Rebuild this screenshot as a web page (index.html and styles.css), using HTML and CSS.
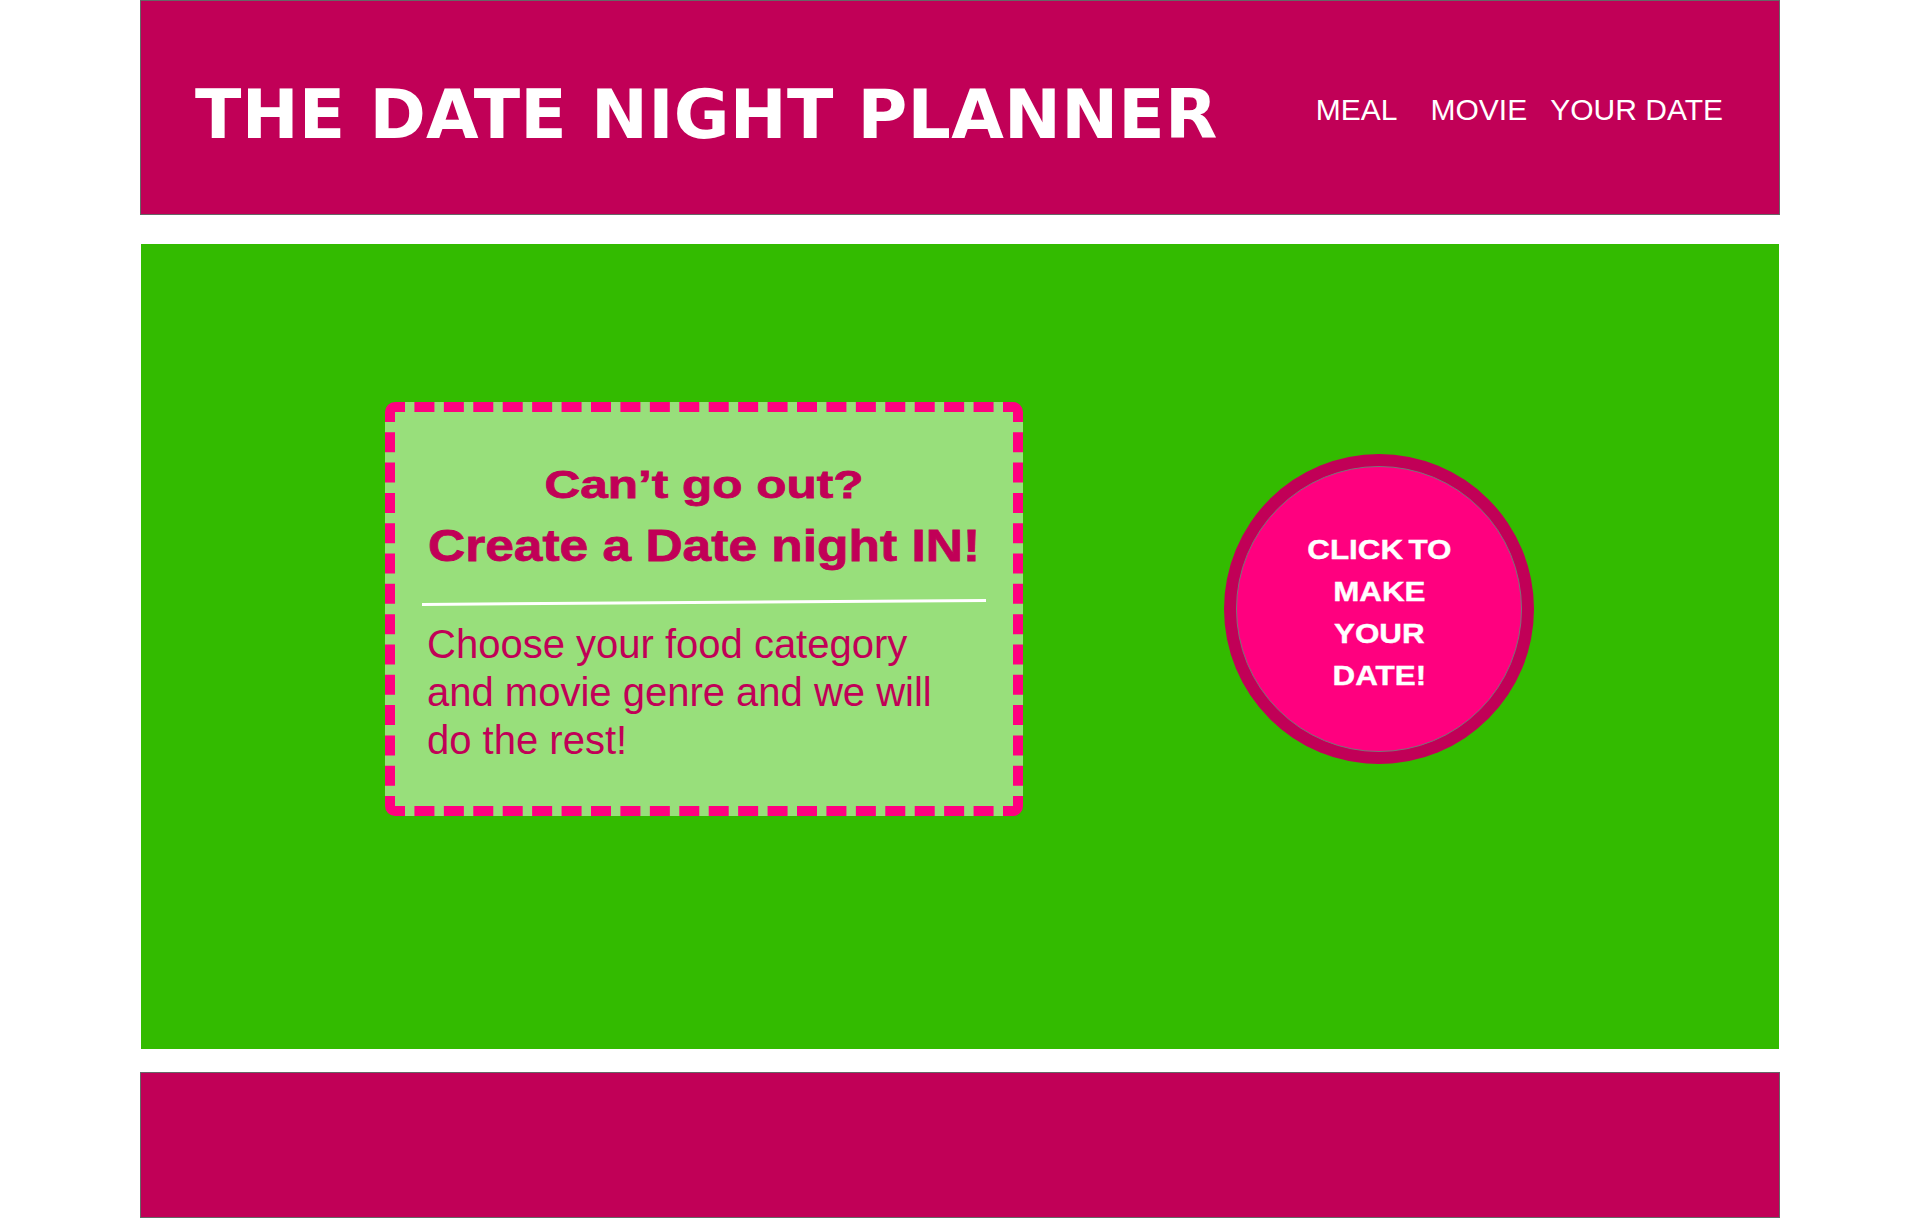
FILE: index.html
```
<!DOCTYPE html>
<html lang="en">
<head>
<meta charset="utf-8">
<title>The Date Night Planner</title>
<link rel="stylesheet" href="styles.css">
</head>
<body>
<div class="page">
  <header class="topbar">
    <h1 class="brand">THE DATE NIGHT PLANNER</h1>
    <nav class="nav">
      <a href="#" class="nav-link">MEAL</a>
      <a href="#" class="nav-link">MOVIE</a>
      <a href="#" class="nav-link">YOUR DATE</a>
    </nav>
  </header>
  <main class="hero">
    <section class="card">
      <h2 class="card-title">
        <span class="line1">Can’t go out?</span>
        <span class="line2">Create a Date night IN!</span>
      </h2>
      <hr class="rule">
      <p class="card-text">Choose your food category<br>and movie genre and we will<br>do the rest!</p>
    </section>
    <a href="#" class="cta"><span class="cta-inner"><span class="cta-text">CLICK TO<br>MAKE<br>YOUR<br>DATE!</span></span></a>
  </main>
  <footer class="footbar"></footer>
</div>
</body>
</html>
```
FILE: styles.css
```
html, body {
  margin: 0;
  padding: 0;
  background: #ffffff;
}

.page {
  width: 1640px;
  margin: 0 auto;
}

.topbar {
  box-sizing: border-box;
  height: 215px;
  border: 1px solid #666666;
  background: #c10057;
  display: flex;
  align-items: flex-start;
  padding: 0 56px 0 54px;
}

.brand {
  margin: 80px 0 0;
  font-family: "DejaVu Sans", sans-serif;
  font-weight: bold;
  font-size: 68px;
  line-height: 68px;
  letter-spacing: 0.25px;
  color: #ffffff;
  white-space: nowrap;
}

.nav {
  margin-left: auto;
  margin-top: 94px;
  display: flex;
  gap: 23px;
}

.nav-link {
  font-family: "Liberation Sans", Arial, sans-serif;
  font-size: 30px;
  line-height: 30px;
  color: #ffffff;
  text-decoration: none;
  white-space: nowrap;
}

.nav-link:first-child {
  margin-right: 10px;
}

.hero {
  box-sizing: border-box;
  margin: 29px 1px 0;
  height: 805px;
  background: #33bb00;
  padding: 158px 0 0 244px;
  display: flex;
  align-items: flex-start;
}

.card {
  box-sizing: border-box;
  width: 638px;
  height: 414px;
  border: 10px dashed #ff0080;
  border-radius: 10px;
  background: #98df7b;
  padding: 41px 27px 0;
}

.card-title {
  margin: 0;
  color: #c10057;
  text-align: center;
  font-family: "Liberation Sans", Arial, sans-serif;
  font-weight: bold;
  -webkit-text-stroke: 0.8px #c10057;
}

.line1 {
  display: block;
  font-size: 39px;
  line-height: 63px;
  transform: scaleX(1.27);
}

.line2 {
  display: block;
  font-size: 44px;
  line-height: 60px;
  transform: scaleX(1.17);
}

.rule {
  margin: 25px 0 0;
  border: 0;
  height: 3px;
  background: #ffffff;
  transform: rotate(-0.4deg);
}

.card-text {
  margin: 16px 0 0 5px;
  font-family: "Liberation Sans", Arial, sans-serif;
  font-size: 40px;
  line-height: 48px;
  color: #c10057;
}

.cta {
  box-sizing: border-box;
  margin: 52px 0 0 201px;
  width: 310px;
  height: 310px;
  border-radius: 50%;
  background: #c10057;
  padding: 12px;
  display: flex;
  text-decoration: none;
}

.cta-inner {
  flex: 1;
  box-sizing: border-box;
  border-radius: 50%;
  background: #ff007f;
  border: 1px solid #777777;
  display: flex;
  align-items: center;
  justify-content: center;
  padding-top: 7px;
}

.cta-text {
  display: block;
  text-align: center;
  color: #ffffff;
  font-family: "Liberation Sans", Arial, sans-serif;
  font-weight: bold;
  font-size: 28px;
  line-height: 42px;
  word-spacing: -3px;
  -webkit-text-stroke: 0.4px #ffffff;
  transform: scaleX(1.12);
}

.footbar {
  box-sizing: border-box;
  margin: 23px 0 0;
  height: 146px;
  border: 1px solid #666666;
  background: #c10057;
}
```
